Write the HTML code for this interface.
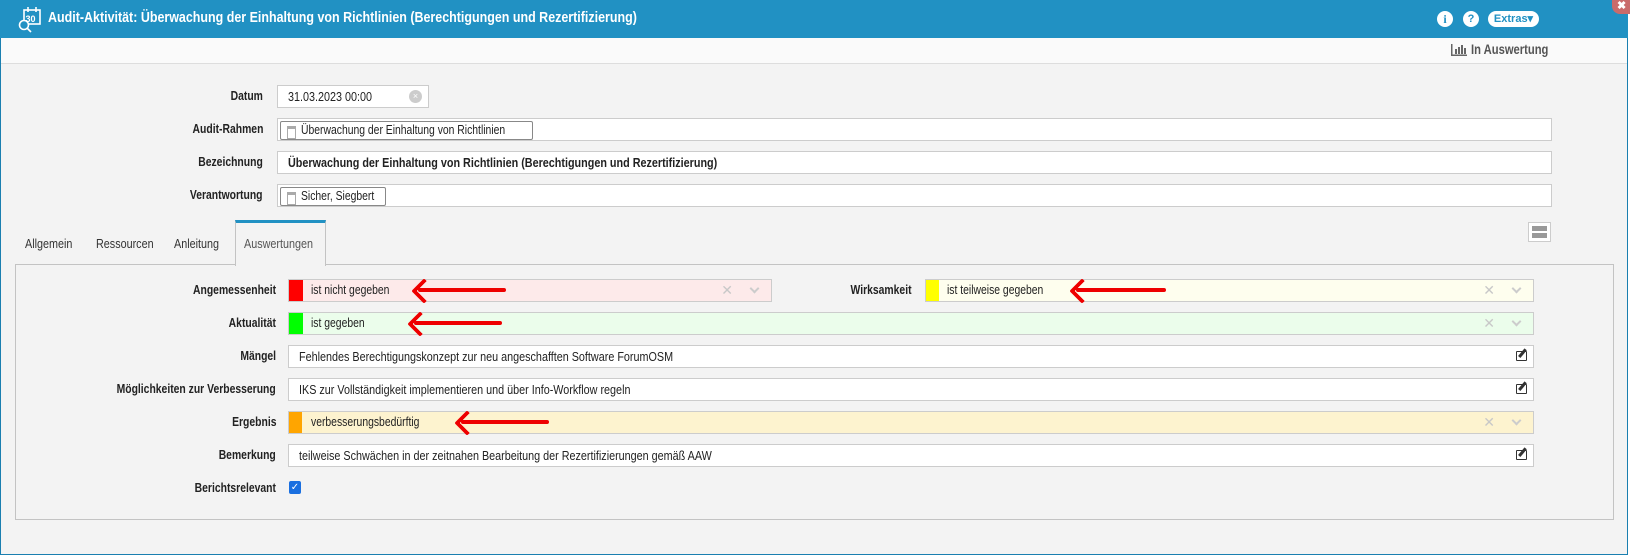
<!DOCTYPE html>
<html><head><meta charset="utf-8"><style>
*{box-sizing:border-box;margin:0;padding:0}
body{width:1630px;height:557px;background:#fff;font-family:"Liberation Sans",sans-serif;font-size:13px;color:#222;position:relative;overflow:hidden}
.a{position:absolute}
.t{display:inline-block;transform:scaleX(.83);transform-origin:left center;white-space:nowrap}
.lbl .t{transform-origin:right center}
.frame{left:0;top:0;width:1628px;height:555px;border:1px solid #1a7fb0;background:#f3f3f3}
.hdr{left:0;top:0;width:1628px;height:38px;background:#2191c3}
.title{left:48px;top:10px;color:#fff;font-weight:bold;font-size:14.5px}
.tb{left:1px;top:38px;width:1626px;height:26px;background:#fafafa;border-bottom:1px solid #ddd}
.lbl{font-weight:bold;text-align:right;width:250px;font-size:12.5px}
.inp{background:#fff;border:1px solid #ccc;height:23px;padding-left:10px;line-height:21px}
.chip{position:absolute;left:2px;top:2px;height:19px;border:1px solid #888;border-radius:2px;background:#fff;line-height:16px;padding:0 4px 0 20px;font-size:12.5px}
.chip:before{content:"";position:absolute;left:6px;top:4px;width:7px;height:9px;border:1.5px solid #aaa;border-top:3px solid #aaa}
.sel{border:1px solid #ccc;height:23px;line-height:21px;padding-left:22px;font-size:12.5px}
.sel .c{position:absolute;left:0;top:0;width:14px;height:21px}
.xs{position:absolute;right:38px;top:0;color:#c8c8c8;font-size:14px}
.dn{position:absolute;right:13px;top:5px;width:7px;height:7px;border-right:2px solid #ccc;border-bottom:2px solid #ccc;transform:rotate(45deg)}
.ed{position:absolute;right:6px;top:5px;width:11px;height:10px;border:1.5px solid #333;border-radius:1px}
.ed:after{content:"";position:absolute;left:4px;top:-4px;width:2.5px;height:10px;background:#333;transform:rotate(40deg)}
.arrow{position:absolute;height:4px;background:#e00;border-radius:2px}
.arrow:before{content:"";position:absolute;left:-3px;top:-6px;width:14px;height:14px;border-left:4px solid #e00;border-bottom:4px solid #e00;transform:rotate(45deg);border-radius:2px}
.tab{position:absolute;top:236px;color:#333}
</style></head><body>
<div class="a frame"></div>
<div class="a hdr"></div>
<svg class="a" style="left:17px;top:6px" width="28" height="28" viewBox="0 0 28 28" fill="none" stroke="#fff" stroke-width="1.6"><rect x="7" y="4" width="16" height="14"/><line x1="11" y1="1" x2="11" y2="6"/><line x1="19" y1="1" x2="19" y2="6"/><text x="8.5" y="16" fill="#fff" stroke="none" font-size="9" font-weight="bold" font-family="Liberation Sans">30</text><circle cx="7" cy="19" r="4.5" fill="#2191c3"/><line x1="10" y1="22" x2="14" y2="26"/></svg>
<div class="a title"><span class="t" style="transform:scaleX(.86)">Audit-Aktivität: Überwachung der Einhaltung von Richtlinien (Berechtigungen und Rezertifizierung)</span></div>
<div class="a" style="left:1437px;top:11px;width:16px;height:16px;border-radius:50%;background:#fff;color:#2191c3;font-weight:bold;font-size:12px;text-align:center;line-height:16px;font-family:'Liberation Serif'">i</div>
<div class="a" style="left:1463px;top:11px;width:16px;height:16px;border-radius:50%;background:#fff;color:#2191c3;font-weight:bold;font-size:11px;text-align:center;line-height:16px">?</div>
<div class="a" style="left:1488px;top:11px;width:51px;height:16px;border-radius:8px;background:#fff;color:#2191c3;font-weight:bold;font-size:11px;text-align:center;line-height:16px">Extras▾</div>
<div class="a" style="left:1612px;top:-6px;width:22px;height:20px;border-radius:0 0 0 8px;background:#c96b6b;color:#fff;font-weight:bold;font-size:11px;padding:5px 0 0 5px">✖</div>
<div class="a tb"></div>
<svg class="a" style="left:1451px;top:44px" width="16" height="12" viewBox="0 0 16 12" fill="#666"><rect x="0" y="0" width="1.5" height="12"/><rect x="0" y="10.5" width="16" height="1.5"/><rect x="4" y="5" width="2" height="5"/><rect x="7" y="3" width="2" height="7"/><rect x="10" y="1" width="2" height="9"/><rect x="13" y="4" width="2" height="6"/></svg>
<div class="a" style="left:1471px;top:42px;font-weight:bold;color:#555;font-size:13.5px"><span class="t">In Auswertung</span></div>

<div class="a lbl" style="left:13px;top:89px"><span class="t">Datum</span></div>
<div class="a inp" style="left:277px;top:85px;width:152px"><span class="t">31.03.2023 00:00</span><span class="a" style="left:131px;top:4px;width:13px;height:13px;border-radius:50%;background:#ccc;color:#fff;font-size:9px;text-align:center;line-height:13px">×</span></div>
<div class="a lbl" style="left:13px;top:122px"><span class="t">Audit-Rahmen</span></div>
<div class="a inp" style="left:277px;top:118px;width:1275px"><span class="chip" style="width:253px"><span class="t">Überwachung der Einhaltung von Richtlinien</span></span></div>
<div class="a lbl" style="left:13px;top:155px"><span class="t">Bezeichnung</span></div>
<div class="a inp" style="left:277px;top:151px;width:1275px;font-weight:bold"><span class="t">Überwachung der Einhaltung von Richtlinien (Berechtigungen und Rezertifizierung)</span></div>
<div class="a lbl" style="left:13px;top:188px"><span class="t">Verantwortung</span></div>
<div class="a inp" style="left:277px;top:184px;width:1275px"><span class="chip" style="width:106px"><span class="t">Sicher, Siegbert</span></span></div>

<div class="tab" style="left:25px"><span class="t">Allgemein</span></div>
<div class="tab" style="left:96px"><span class="t">Ressourcen</span></div>
<div class="tab" style="left:174px"><span class="t">Anleitung</span></div>
<div class="a" style="left:1528px;top:222px;width:23px;height:20px;border:1px solid #ccc;background:#fff;padding:3px"><div style="height:5px;background:#999;margin-bottom:2px"></div><div style="height:5px;background:#999"></div></div>
<div class="a" style="left:15px;top:264px;width:1599px;height:256px;border:1px solid #c3c3c3;background:#f3f3f3"></div>
<div class="a" style="left:235px;top:220px;width:91px;height:46px;border:1px solid #c3c3c3;border-top:3px solid #2191c3;border-bottom:none;background:#f3f3f3;color:#555;padding:13px 0 0 8px"><span class="t">Auswertungen</span></div>

<div class="a lbl" style="left:26px;top:283px"><span class="t">Angemessenheit</span></div>
<div class="a sel" style="left:288px;top:279px;width:484px;background:#fdeaea"><span class="c" style="background:#f00"></span><span class="t">ist nicht gegeben</span><span class="xs">✕</span><span class="dn"></span></div>
<div class="arrow" style="left:418px;top:288px;width:88px"></div>
<div class="a lbl" style="left:662px;top:283px"><span class="t">Wirksamkeit</span></div>
<div class="a sel" style="left:925px;top:279px;width:609px;background:#fefeee;padding-left:21px"><span class="c" style="background:#ff0;width:13px"></span><span class="t">ist teilweise gegeben</span><span class="xs">✕</span><span class="dn"></span></div>
<div class="arrow" style="left:1076px;top:288px;width:90px"></div>

<div class="a lbl" style="left:26px;top:316px"><span class="t">Aktualität</span></div>
<div class="a sel" style="left:288px;top:312px;width:1246px;background:#ebfdeb"><span class="c" style="background:#0f0"></span><span class="t">ist gegeben</span><span class="xs">✕</span><span class="dn"></span></div>
<div class="arrow" style="left:414px;top:321px;width:88px"></div>

<div class="a lbl" style="left:26px;top:349px"><span class="t">Mängel</span></div>
<div class="a inp" style="left:288px;top:345px;width:1246px"><span class="t">Fehlendes Berechtigungskonzept zur neu angeschafften Software ForumOSM</span><span class="ed"></span></div>
<div class="a lbl" style="left:26px;top:382px"><span class="t">Möglichkeiten zur Verbesserung</span></div>
<div class="a inp" style="left:288px;top:378px;width:1246px"><span class="t">IKS zur Vollständigkeit implementieren und über Info-Workflow regeln</span><span class="ed"></span></div>
<div class="a lbl" style="left:26px;top:415px"><span class="t">Ergebnis</span></div>
<div class="a sel" style="left:288px;top:411px;width:1246px;background:#fdf3cf"><span class="c" style="background:#ffa500;width:13px"></span><span class="t">verbesserungsbedürftig</span><span class="xs">✕</span><span class="dn"></span></div>
<div class="arrow" style="left:461px;top:420px;width:88px"></div>
<div class="a lbl" style="left:26px;top:448px"><span class="t">Bemerkung</span></div>
<div class="a inp" style="left:288px;top:444px;width:1246px"><span class="t">teilweise Schwächen in der zeitnahen Bearbeitung der Rezertifizierungen gemäß AAW</span><span class="ed"></span></div>
<div class="a lbl" style="left:26px;top:481px"><span class="t">Berichtsrelevant</span></div>
<div class="a" style="left:289px;top:481px;width:12px;height:13px;background:#1a6fe0;border-radius:2px;color:#fff;font-size:10px;text-align:center;line-height:13px">✓</div>
</body></html>
